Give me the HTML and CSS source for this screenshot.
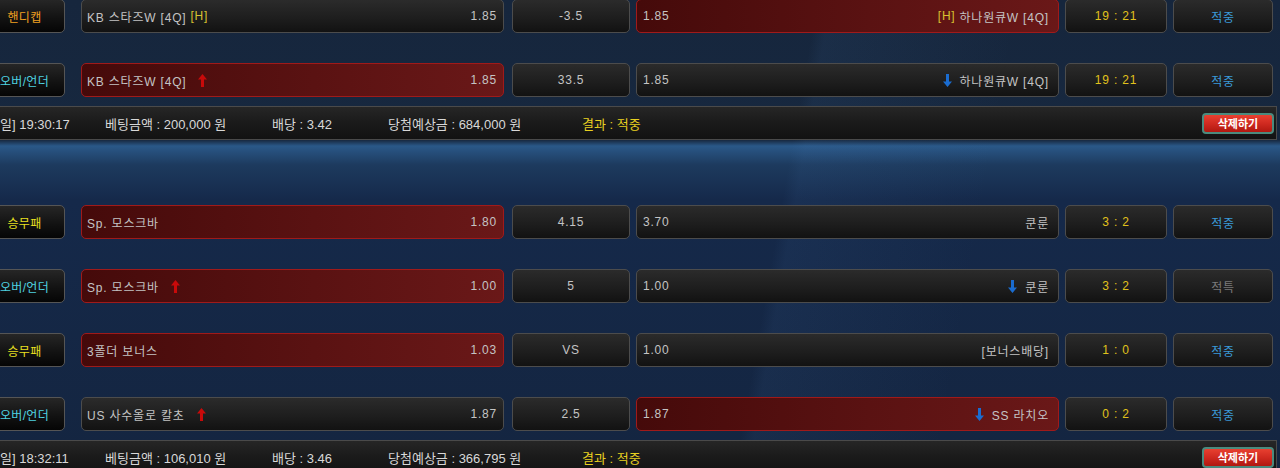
FILE: index.html
```html
<!DOCTYPE html>
<html lang="ko">
<head>
    <meta charset="UTF-8">
    <title>배팅내역</title>
    <link rel="stylesheet" href="styles.css">
</head>
<body>
    <div class="bet-list">

        <!-- 배팅 1 -->
        <div class="bet-slip">
            <div class="game-row">
                <div class="cell type handicap">핸디캡</div>
                <div class="cell team home"><span class="name">KB 스타즈W [4Q] <em>[H]</em></span><span class="odds">1.85</span></div>
                <div class="cell line">-3.5</div>
                <div class="cell team away picked"><span class="odds">1.85</span><span class="name"><em>[H]</em> 하나원큐W [4Q]</span></div>
                <div class="cell score">19 : 21</div>
                <div class="cell result win">적중</div>
            </div>
            <div class="game-row">
                <div class="cell type overunder">오버/언더</div>
                <div class="cell team home picked"><span class="name">KB 스타즈W [4Q] <svg class="arrow up" width="9" height="13" viewBox="0 0 9 13"><polygon points="4.5,0 9,5.5 6,5.5 6,13 3,13 3,5.5 0,5.5"/></svg></span><span class="odds">1.85</span></div>
                <div class="cell line">33.5</div>
                <div class="cell team away"><span class="odds">1.85</span><span class="name"><svg class="arrow down" width="9" height="13" viewBox="0 0 9 13"><polygon points="3,0 6,0 6,7.5 9,7.5 4.5,13 0,7.5 3,7.5"/></svg> 하나원큐W [4Q]</span></div>
                <div class="cell score">19 : 21</div>
                <div class="cell result win">적중</div>
            </div>
            <div class="slip-bar">
                <span class="date">일] 19:30:17</span>
                <span class="amount">베팅금액 : 200,000 원</span>
                <span class="rate">배당 : 3.42</span>
                <span class="prize">당첨예상금 : 684,000 원</span>
                <span class="outcome">결과 : 적중</span>
                <button class="delete-btn">삭제하기</button>
            </div>
        </div>

        <!-- 배팅 2 -->
        <div class="bet-slip">
            <div class="game-row">
                <div class="cell type winlose">승무패</div>
                <div class="cell team home picked"><span class="name">Sp. 모스크바</span><span class="odds">1.80</span></div>
                <div class="cell line">4.15</div>
                <div class="cell team away"><span class="odds">3.70</span><span class="name">쿤룬</span></div>
                <div class="cell score">3 : 2</div>
                <div class="cell result win">적중</div>
            </div>
            <div class="game-row">
                <div class="cell type overunder">오버/언더</div>
                <div class="cell team home picked"><span class="name">Sp. 모스크바 <svg class="arrow up" width="9" height="13" viewBox="0 0 9 13"><polygon points="4.5,0 9,5.5 6,5.5 6,13 3,13 3,5.5 0,5.5"/></svg></span><span class="odds">1.00</span></div>
                <div class="cell line">5</div>
                <div class="cell team away"><span class="odds">1.00</span><span class="name"><svg class="arrow down" width="9" height="13" viewBox="0 0 9 13"><polygon points="3,0 6,0 6,7.5 9,7.5 4.5,13 0,7.5 3,7.5"/></svg> 쿤룬</span></div>
                <div class="cell score">3 : 2</div>
                <div class="cell result special">적특</div>
            </div>
            <div class="game-row">
                <div class="cell type winlose">승무패</div>
                <div class="cell team home picked"><span class="name">3폴더 보너스</span><span class="odds">1.03</span></div>
                <div class="cell line">VS</div>
                <div class="cell team away"><span class="odds">1.00</span><span class="name">[보너스배당]</span></div>
                <div class="cell score">1 : 0</div>
                <div class="cell result win">적중</div>
            </div>
            <div class="game-row">
                <div class="cell type overunder">오버/언더</div>
                <div class="cell team home"><span class="name">US 사수올로 칼초 <svg class="arrow up" width="9" height="13" viewBox="0 0 9 13"><polygon points="4.5,0 9,5.5 6,5.5 6,13 3,13 3,5.5 0,5.5"/></svg></span><span class="odds">1.87</span></div>
                <div class="cell line">2.5</div>
                <div class="cell team away picked"><span class="odds">1.87</span><span class="name"><svg class="arrow down" width="9" height="13" viewBox="0 0 9 13"><polygon points="3,0 6,0 6,7.5 9,7.5 4.5,13 0,7.5 3,7.5"/></svg> SS 라치오</span></div>
                <div class="cell score">0 : 2</div>
                <div class="cell result win">적중</div>
            </div>
            <div class="slip-bar">
                <span class="date">일] 18:32:11</span>
                <span class="amount">베팅금액 : 106,010 원</span>
                <span class="rate">배당 : 3.46</span>
                <span class="prize">당첨예상금 : 366,795 원</span>
                <span class="outcome">결과 : 적중</span>
                <button class="delete-btn">삭제하기</button>
            </div>
        </div>

    </div>
</body>
</html>
```

FILE: styles.css
```css
/* General Reset */
* {
    margin: 0;
    padding: 0;
    box-sizing: border-box;
}

body {
    font-family: "Liberation Sans", "Noto Sans CJK KR", sans-serif;
    font-size: 12px;
    color: #c4c4c4;
    background-color: #142540;
    background-image:
        linear-gradient(100deg, transparent 60%, rgba(80, 130, 190, 0.08) 61%, transparent 75%),
        linear-gradient(180deg, #16263d 0px, #17283f 140px, #2a5888 146px, #1d3a5e 165px, #15294a 200px, #142540 468px);
    overflow: hidden;
    height: 468px;
}

/* List */
.bet-list {
    margin: -1px 0 0 -16px;
    display: flex;
    flex-direction: column;
    gap: 65px;
}

.bet-slip {
    display: flex;
    flex-direction: column;
    gap: 30px;
}

/* Game Row */
.game-row {
    display: grid;
    grid-template-columns: 81px 435px 118px 423px 102px 100px;
    column-gap: 6px;
    height: 34px;
}

.game-row .team.home {
    margin: 0 2px 0 10px;
}

.cell {
    display: flex;
    align-items: center;
    justify-content: center;
    height: 34px;
    border: 1px solid #4c4c4c;
    border-radius: 5px;
    background: linear-gradient(180deg, #2b2b2b 0%, #1e1e1e 55%, #121212 100%);
    white-space: nowrap;
    letter-spacing: 0.8px;
}

.type {
    border-color: #555;
    background: linear-gradient(180deg, #262626 0%, #111 60%, #050505 100%);
    letter-spacing: 0.3px;
}

.type.handicap { color: #f0a020; }
.type.overunder { color: #4fd2e0; }
.type.winlose { color: #e8e020; }

.team {
    justify-content: space-between;
    padding: 0 6px 0 5px;
}

.team.away {
    padding: 0 9px 0 6px;
}

.team .name {
    display: flex;
    align-items: center;
    gap: 4px;
}

.team em {
    font-style: normal;
    color: #d8c030;
}

.team.picked {
    border-color: #a01a1a;
    background: linear-gradient(90deg, #450a0a 0%, #5a1212 55%, #6a1818 100%);
}

.arrow {
    margin-left: 8px;
}

.arrow.up { fill: #c80a0a; }
.arrow.down {
    fill: #1a6cd0;
    margin: 0 4px 0 0;
}

.score {
    color: #e0c21c;
}

.result.win { color: #3a9ad8; }
.result.special { color: #7a7a7a; }

/* Slip Bar */
.slip-bar {
    display: flex;
    align-items: center;
    height: 34px;
    margin: -21px 3px 0 0;
    padding-left: 16px;
    border: 1px solid #4a4a4a;
    border-left: none;
    background: linear-gradient(180deg, #262626 0%, #1a1a1a 50%, #121212 100%);
    font-size: 13px;
    color: #d8d8d8;
}

.slip-bar .date { width: 105px; }
.slip-bar .amount { width: 167px; }
.slip-bar .rate { width: 116px; }
.slip-bar .prize { width: 194px; }
.slip-bar .outcome { color: #e8d020; }

.delete-btn {
    margin-left: auto;
    margin-right: 2px;
    width: 72px;
    height: 21px;
    border: 2px solid #4a8a7e;
    border-radius: 4px;
    background: linear-gradient(180deg, #e84030 0%, #d02a20 50%, #b01810 100%);
    color: #fff;
    font-family: "Noto Sans CJK KR", sans-serif;
    font-size: 11px;
    font-weight: bold;
    cursor: pointer;
}
```
